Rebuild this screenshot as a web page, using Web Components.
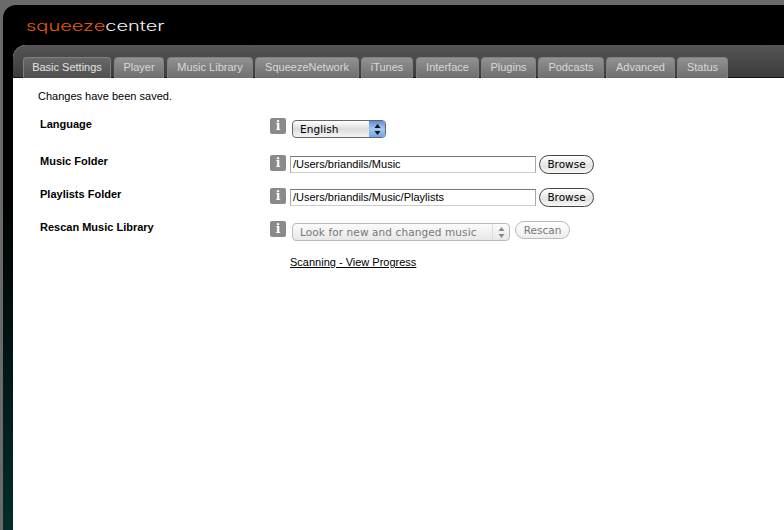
<!DOCTYPE html>
<html><head><meta charset="utf-8">
<style>
html,body{margin:0;padding:0;height:530px;overflow:hidden;background:#6a6a6a;font-family:"Liberation Sans",Arial,sans-serif}
</style></head><body>
<sc-app>
<sc-tab slot="tabs" w="88" active>Basic Settings</sc-tab>
<sc-tab slot="tabs" w="50" g="3">Player</sc-tab>
<sc-tab slot="tabs" w="86" g="3">Music Library</sc-tab>
<sc-tab slot="tabs" w="104" g="2">SqueezeNetwork</sc-tab>
<sc-tab slot="tabs" w="52" g="2">iTunes</sc-tab>
<sc-tab slot="tabs" w="63" g="3">Interface</sc-tab>
<sc-tab slot="tabs" w="55" g="2">Plugins</sc-tab>
<sc-tab slot="tabs" w="66" g="2">Podcasts</sc-tab>
<sc-tab slot="tabs" w="69" g="2">Advanced</sc-tab>
<sc-tab slot="tabs" w="51" g="2">Status</sc-tab>
<sc-msg>Changes have been saved.</sc-msg>
<sc-row label="Language" h="37"><sc-select>English</sc-select></sc-row>
<sc-row label="Music Folder" h="33"><sc-path>/Users/briandils/Music</sc-path><sc-btn>Browse</sc-btn></sc-row>
<sc-row label="Playlists Folder" h="33"><sc-path>/Users/briandils/Music/Playlists</sc-path><sc-btn>Browse</sc-btn></sc-row>
<sc-row label="Rescan Music Library" h="37"><sc-select disabled>Look for new and changed music</sc-select><sc-btn disabled>Rescan</sc-btn></sc-row>
<sc-link>Scanning - View Progress</sc-link>
</sc-app>
<script>
function def(name,css,html,init){
  customElements.define(name,class extends HTMLElement{
    constructor(){super();this.attachShadow({mode:'open'}).innerHTML='<style>'+css+'</style>'+html;}
    connectedCallback(){if(init)init(this);}
  });
}
const FONT='"Liberation Sans",Arial,sans-serif';
def('sc-app',`
:host{display:block;height:530px;box-sizing:border-box;padding:5px 0 0 3px;font-family:${FONT}}
.win{height:525px;box-sizing:border-box;border-radius:13px 0 0 0;background:linear-gradient(#000 0,#000 190px,#032d2a 100%);padding-left:10px;display:flex;flex-direction:column}
.logo{height:40px;flex:none;box-sizing:border-box;padding:13px 0 0 13px;font:300 14px/15px Inter,"DejaVu Sans",sans-serif;color:#f4f4f4;white-space:nowrap}
.logo span{display:inline-block;transform:scaleX(1.43);transform-origin:0 50%}
.logo b{font-weight:300;color:#e8590c}
.panel{flex:1;border-radius:13px 0 0 0;background:#fff;overflow:hidden;display:flex;flex-direction:column}
.tabs{height:33px;flex:none;box-sizing:border-box;background:linear-gradient(#555,#3c3c3c);padding:12px 0 0 10px;display:flex;border-bottom:1px solid #111}
.body{flex:1}
`,`<div class="win"><div class="logo"><span><b>squeeze</b>center</span></div><div class="panel"><div class="tabs"><slot name="tabs"></slot></div><div class="body"><slot></slot></div></div></div>`);
def('sc-tab',`
:host{display:block;flex:none;box-sizing:border-box;height:21px;border:1px solid #808080;border-bottom:0;border-radius:4px 4px 0 0;background:linear-gradient(#929292,#6e6e6e);color:#d9d9d9;font:11px/18px ${FONT};text-align:center;white-space:nowrap;margin-bottom:-1px}
:host([active]){background:linear-gradient(#686868,#505050);color:#e4e4e4}
`,`<slot></slot>`,el=>{el.style.width=el.getAttribute('w')+'px';el.style.marginLeft=(el.getAttribute('g')||0)+'px'});
def('sc-msg',`:host{display:block;font:11px/14px ${FONT};color:#000;padding:11px 0 0 25px;height:26px}`,`<slot></slot>`);
def('sc-row',`
:host{display:flex;box-sizing:border-box;padding-left:27px;color:#000}
.l{width:230px;flex:none;font:bold 11px/14px ${FONT};padding-top:2px}
.i{width:16px;height:16px;flex:none;border-radius:2px;background:#8a8a8a;color:#fff;font:bold 12px/16px "DejaVu Serif",serif;text-align:center;margin:3px 4px 0 0}
.c{display:flex;align-items:flex-start;gap:3px;margin-top:3px}
`,`<div class="l"></div><div class="i">i</div><div class="c"><slot></slot></div>`,el=>{
  el.shadowRoot.querySelector('.l').textContent=el.getAttribute('label');
  el.style.height=el.getAttribute('h')+'px';
});
def('sc-select',`
:host{display:block;box-sizing:border-box;height:18px;width:94px;margin:2px 0 0 2px;border:1px solid #666;border-radius:4px;background:linear-gradient(#fff,#dcdcdc 50%,#f4f4f4);font:10.5px/17px "DejaVu Sans",sans-serif;letter-spacing:.1px;color:#000;position:relative;padding-left:7px;white-space:nowrap}
.a{position:absolute;right:0;top:0;bottom:0;width:16px;border-radius:0 3px 3px 0;background:linear-gradient(#5b8fdc,#a5c8f2 50%,#6fa5ea);display:flex;align-items:center;justify-content:center}
:host([disabled]){width:218px;height:18px;margin-right:2px;border-color:#bbb;color:#777;background:linear-gradient(#fbfbfb,#e8e8e8)}
:host([disabled]) .a{background:none;border-left:1px solid #ddd}
:host([disabled]) path{fill:#888}
`,`<slot></slot><span class="a"><svg width="7" height="11" viewBox="0 0 7 11"><path d="M3.5 0 6.5 4H.5ZM3.5 11 .5 7H6.5Z" fill="#111"/></svg></span>`);
def('sc-path',`
:host{display:block;box-sizing:border-box;width:246px;height:17px;margin-top:1px;border:1px solid #a8a8a8;border-top-color:#777;border-bottom-color:#ccc;background:#fff;font:11px/15px ${FONT};color:#000;padding-left:2px;white-space:nowrap}
`,`<slot></slot>`);
def('sc-btn',`
:host{display:block;box-sizing:border-box;height:19px;width:55px;margin:0;border:1px solid #444;border-radius:10px;background:linear-gradient(#fff,#e4e4e4 60%,#f6f6f6);font:10.5px/17px "DejaVu Sans",sans-serif;color:#000;text-align:center}
:host([disabled]){border-color:#bbb;color:#777;background:linear-gradient(#fff,#ededed);height:18px;line-height:16px}
`,`<slot></slot>`);
def('sc-link',`:host{display:block;padding-left:277px;font:11px/14px ${FONT};color:#000;text-decoration:underline}`,`<slot></slot>`);
</script>
</body></html>
